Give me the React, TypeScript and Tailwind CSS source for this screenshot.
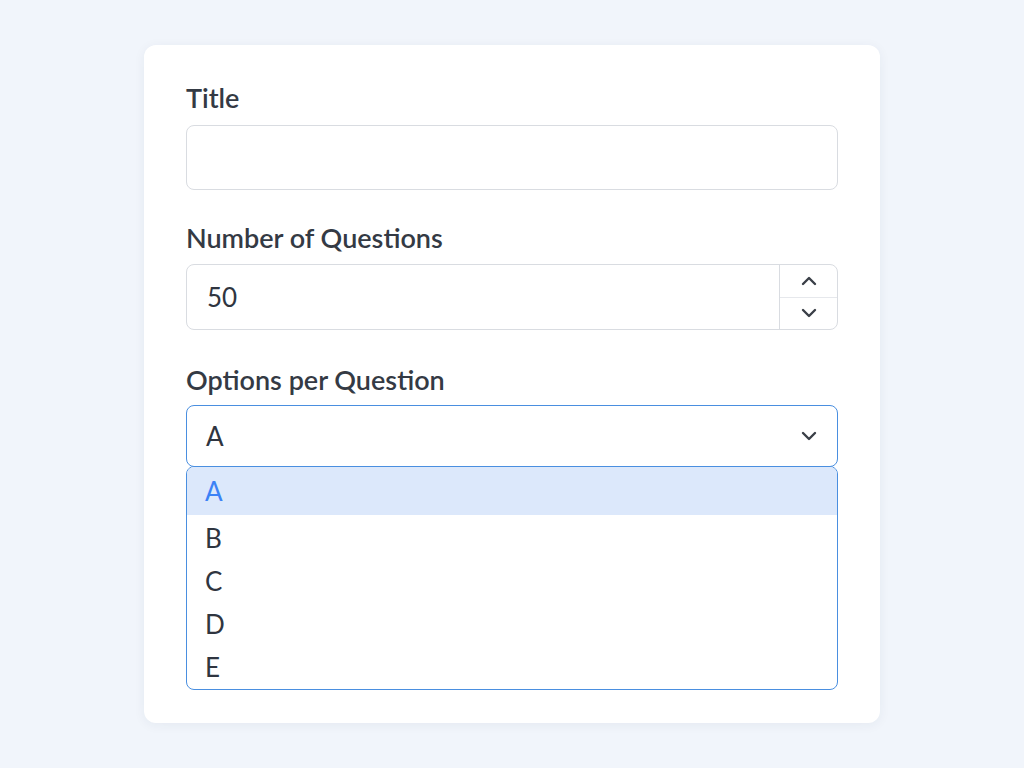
import { ChevronDown, ChevronUp } from 'lucide-react'

const OPTIONS = ['A', 'B', 'C', 'D', 'E']

export default function App() {
  return (
    <div
      className="min-h-[768px] w-full bg-[#f1f5fb] flex justify-center pt-[45px]"
      style={{ fontFamily: 'Lato, "Noto Sans", sans-serif' }}
    >
      <div className="w-[736px] h-[678px] bg-white rounded-[12px] shadow-[0_2px_12px_rgba(30,50,90,0.06)] px-[42px] pt-[37px]">
        <label className="block text-[27px] leading-[32px] font-semibold text-[#343a44]">Title</label>
        <div className="mt-[11px] h-[65px] rounded-[8px] border border-[#d9dce1] bg-white" />

        <label className="block mt-[32px] text-[27px] leading-[32px] font-semibold text-[#343a44]">
          Number of Questions
        </label>
        <div className="mt-[10px] h-[66px] rounded-[8px] border border-[#d9dce1] bg-white flex">
          <div className="flex-1 flex items-center pl-[20px] text-[26px] text-[#2f3540]">50</div>
          <div className="w-[58px] border-l border-[#d9dce1] flex flex-col">
            <div className="flex-1 flex items-center justify-center border-b border-[#e6e8ec]">
              <ChevronUp size={24} strokeWidth={2.4} className="text-[#3a3f47]" />
            </div>
            <div className="flex-1 flex items-center justify-center">
              <ChevronDown size={24} strokeWidth={2.4} className="text-[#3a3f47]" />
            </div>
          </div>
        </div>

        <label className="block mt-[34px] text-[27px] leading-[32px] font-semibold text-[#343a44]">
          Options per Question
        </label>
        <div className="relative mt-[9px]">
          <div className="h-[62px] rounded-[8px] border-[1.5px] border-[#4a8fe0] bg-white flex items-center justify-between pl-[19px] pr-[16px]">
            <span className="text-[26px] text-[#2f3540]">A</span>
            <ChevronDown size={24} strokeWidth={2.4} className="text-[#3a3f47]" />
          </div>
          <div className="absolute left-0 right-0 top-[61px] h-[224px] rounded-[8px] border-[1.5px] border-[#4a8fe0] bg-white overflow-hidden">
            {OPTIONS.map((o, i) => (
              <div
                key={o}
                className={
                  i === 0
                    ? 'h-[48px] flex items-center pl-[18px] text-[26px] bg-[#dce8fb] text-[#3b82f6]'
                    : 'h-[43px] flex items-center pl-[18px] pt-[3px] text-[26px] text-[#2f3540]'
                }
              >
                {o}
              </div>
            ))}
          </div>
        </div>
      </div>
    </div>
  )
}
